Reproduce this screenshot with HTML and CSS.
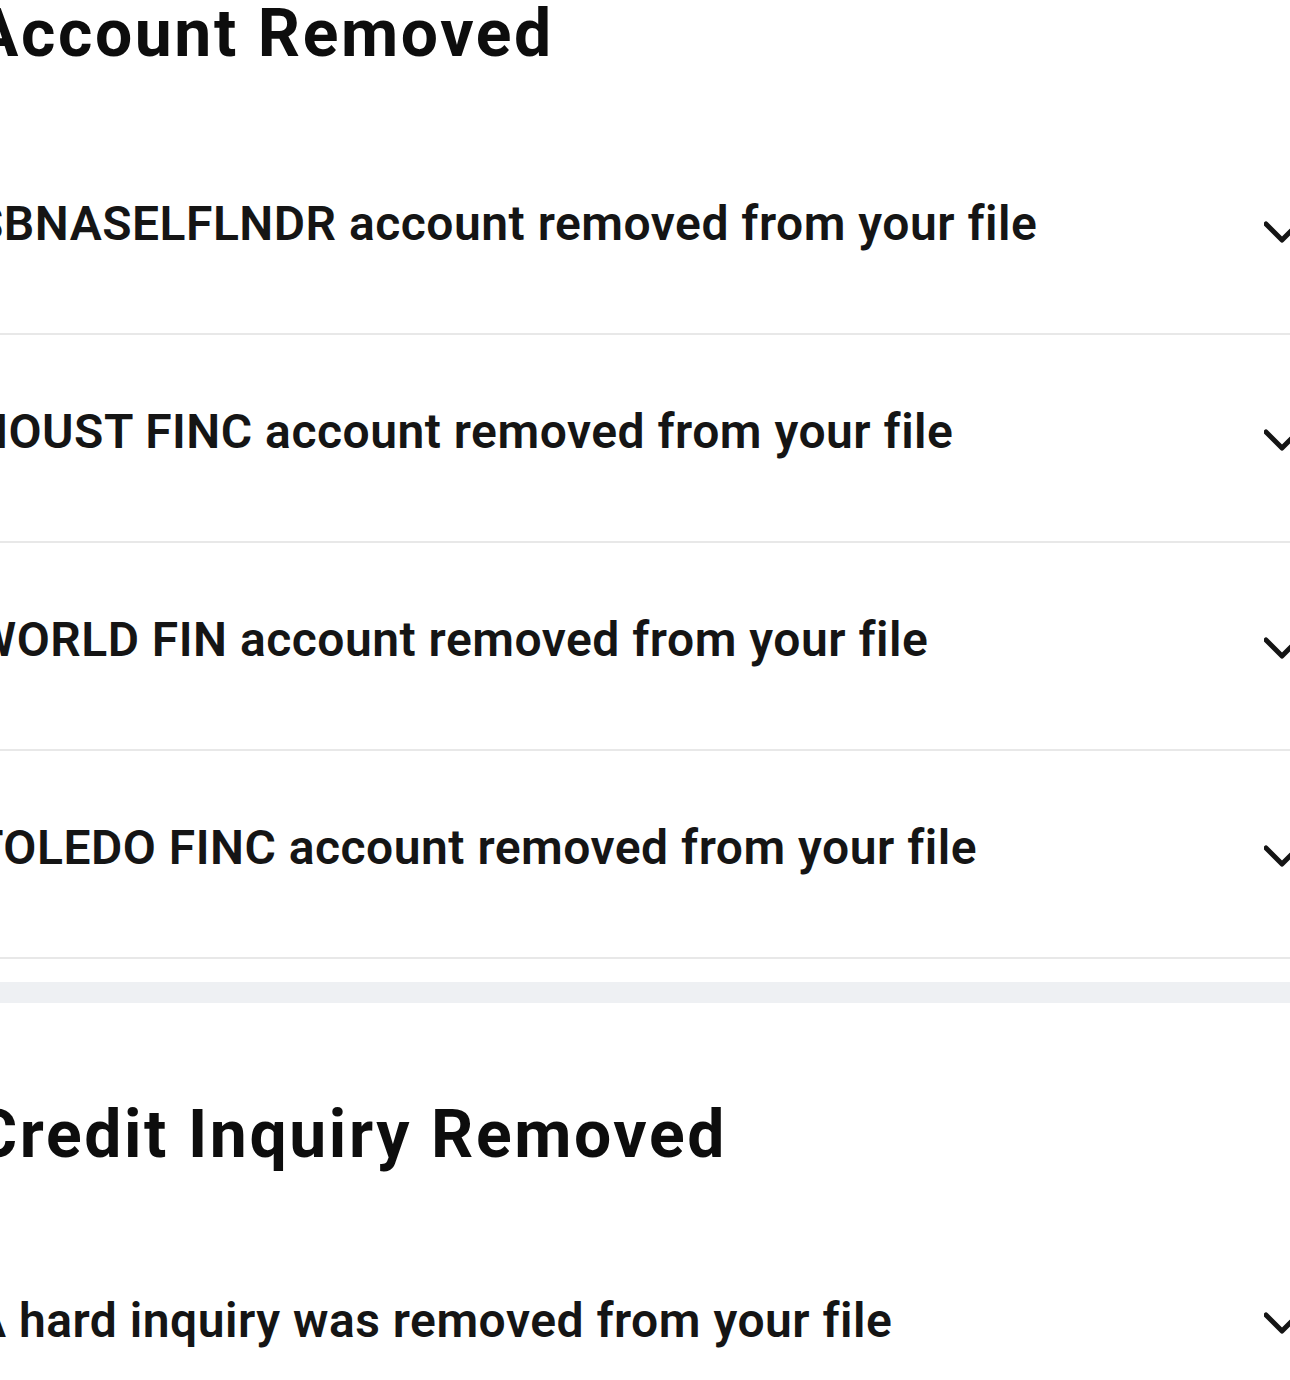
FILE: index.html
```html
<!DOCTYPE html>
<html lang="en">
<head>
<meta charset="utf-8">
<title>Removed items</title>
<link rel="stylesheet" href="styles.css">
</head>
<body>
<main class="page">
  <section class="section">
    <h2 class="section-title">Account Removed</h2>
    <ul class="items">
      <li class="item"><span class="item-text">SBNASELFLNDR account removed from your file</span><svg class="chev" viewBox="0 0 36 22"><polyline points="2,3 18,19 34,3"/></svg></li>
      <li class="item"><span class="item-text">HOUST FINC account removed from your file</span><svg class="chev" viewBox="0 0 36 22"><polyline points="2,3 18,19 34,3"/></svg></li>
      <li class="item"><span class="item-text">WORLD FIN account removed from your file</span><svg class="chev" viewBox="0 0 36 22"><polyline points="2,3 18,19 34,3"/></svg></li>
      <li class="item"><span class="item-text">TOLEDO FINC account removed from your file</span><svg class="chev" viewBox="0 0 36 22"><polyline points="2,3 18,19 34,3"/></svg></li>
    </ul>
  </section>
  <div class="band"></div>
  <section class="section section-second">
    <h2 class="section-title">Credit Inquiry Removed</h2>
    <ul class="items">
      <li class="item item-last"><span class="item-text">A hard inquiry was removed from your file</span><svg class="chev" viewBox="0 0 36 22"><polyline points="2,3 18,19 34,3"/></svg></li>
    </ul>
  </section>
</main>
</body>
</html>
```
FILE: styles.css
```css
html, body {
  margin: 0;
  padding: 0;
  background: #ffffff;
  overflow: hidden;
}
body {
  font-family: Roboto, "Liberation Sans", Arial, sans-serif;
  color: #111111;
}
.page {
  width: 1326px;
  margin-left: -26px;
  display: flex;
  flex-direction: column;
}
.section-title {
  margin: 0;
  padding-top: 1px;
  font-size: 66px;
  line-height: 1;
  font-weight: 700;
  color: #0d0d0d;
  letter-spacing: 2.6px;
}
.items {
  list-style: none;
  margin: 60px 0 0;
  padding: 0;
  display: flex;
  flex-direction: column;
}
.item {
  display: flex;
  align-items: center;
  justify-content: space-between;
  height: 206px;
  box-sizing: content-box;
  border-bottom: 2px solid #e8e8e8;
}
.item-text {
  padding-bottom: 12px;
  font-size: 48px;
  line-height: 58px;
  font-weight: 600;
  color: #151515;
  letter-spacing: 0.5px;
}
.chev {
  width: 36px;
  height: 22px;
  margin-top: 4px;
  flex: none;
}
.chev polyline {
  fill: none;
  stroke: #151515;
  stroke-width: 5;
  stroke-linecap: round;
  stroke-linejoin: round;
}
.band {
  height: 21px;
  margin-top: 23px;
  background: #eef0f3;
}
.section-second {
  padding-top: 98px;
}
.section-second .items {
  margin-top: 0;
}
.item-last {
  border-bottom: none;
  height: auto;
  padding-top: 124px;
}
.item-last .item-text {
  padding-bottom: 0;
}
```
